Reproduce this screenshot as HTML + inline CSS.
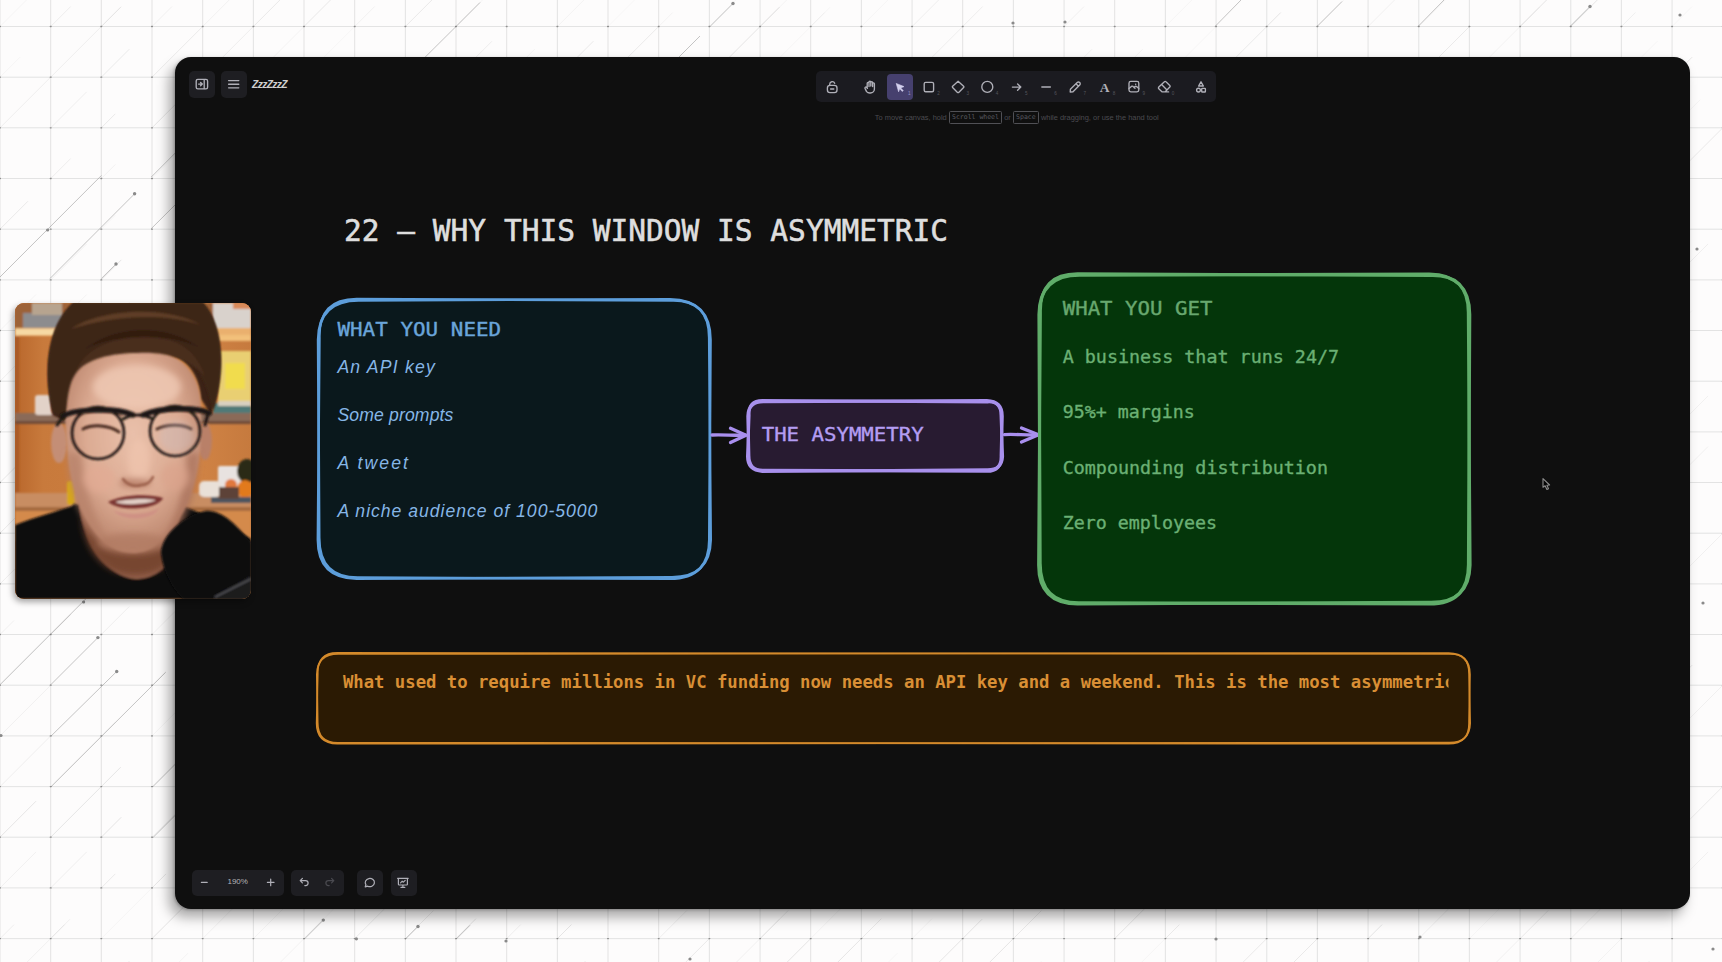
<!DOCTYPE html>
<html lang="en">
<head>
<meta charset="utf-8">
<title>ZzzZzzZ - whiteboard</title>
<style>
html,body{margin:0;padding:0;}
body{width:1722px;height:962px;overflow:hidden;position:relative;background:#fdfcfc;font-family:"Liberation Sans",sans-serif;}
#grid{position:absolute;left:0;top:0;width:1722px;height:962px;}
#win{position:absolute;left:175px;top:57px;width:1515px;height:851.5px;background:#0f0f0f;border-radius:16px;box-shadow:-6px 8px 13px rgba(0,0,0,0.34), -1px 1px 3px rgba(0,0,0,0.25);}
.btn{position:absolute;background:#1e1e22;border-radius:5px;}
#title{position:absolute;left:252px;top:78.5px;font:italic bold 10.3px "Liberation Sans",sans-serif;color:#cfcfcf;letter-spacing:-0.65px;}
#tools{position:absolute;left:816px;top:71px;width:400px;height:30.5px;background:#1b1b20;border-radius:5px;}
#sel{position:absolute;left:887px;top:73.5px;width:26px;height:26.5px;background:#46406e;border-radius:4px;}
#hint{position:absolute;left:874.8px;top:112.6px;width:290px;font:7.45px "Liberation Sans",sans-serif;color:#4b4b4f;white-space:nowrap;letter-spacing:0;}
#hint kbd{font:6.5px "DejaVu Sans Mono","Liberation Mono",monospace;border:0.8px solid #505055;border-radius:1.5px;padding:1.2px 2.2px;color:#5a5a60;}
#canvas{position:absolute;left:0;top:0;width:1722px;height:962px;}
#cam{position:absolute;left:15px;top:303px;width:236px;height:296px;border-radius:9px;overflow:hidden;background:#b8733c;box-shadow:-2px 3px 6px rgba(0,0,0,0.35);}
#zoomtxt{position:absolute;left:217.7px;top:877.3px;width:40px;text-align:center;font:8px "Liberation Sans",sans-serif;color:#b4b4b8;}
</style>
</head>
<body>
<svg id="grid" viewBox="0 0 1722 962">
<rect width="1722" height="962" fill="#fdfcfc"/>
<path d="M0.0 0V962M50.7 0V962M101.3 0V962M152.0 0V962M202.7 0V962M253.4 0V962M304.0 0V962M354.7 0V962M405.4 0V962M456.0 0V962M506.7 0V962M557.4 0V962M608.0 0V962M658.7 0V962M709.4 0V962M760.1 0V962M810.7 0V962M861.4 0V962M912.1 0V962M962.7 0V962M1013.4 0V962M1064.1 0V962M1114.7 0V962M1165.4 0V962M1216.1 0V962M1266.8 0V962M1317.4 0V962M1368.1 0V962M1418.8 0V962M1469.4 0V962M1520.1 0V962M1570.8 0V962M1621.4 0V962M1672.1 0V962M1722.8 0V962M0 26.5H1722M0 77.2H1722M0 127.8H1722M0 178.5H1722M0 229.2H1722M0 279.9H1722M0 330.5H1722M0 381.2H1722M0 431.9H1722M0 482.5H1722M0 533.2H1722M0 583.9H1722M0 634.5H1722M0 685.2H1722M0 735.9H1722M0 786.6H1722M0 837.2H1722M0 887.9H1722M0 938.6H1722" stroke="#e0e0e0" stroke-width="0.9" fill="none"/>
<path d="M-51.1 26.5h0.8M-51.1 77.2h0.8M-51.1 127.8h0.8M-51.1 178.5h0.8M-51.1 229.2h0.8M-51.1 279.9h0.8M-51.1 330.5h0.8M-51.1 381.2h0.8M-51.1 431.9h0.8M-51.1 482.5h0.8M-51.1 533.2h0.8M-51.1 583.9h0.8M-51.1 634.5h0.8M-51.1 685.2h0.8M-51.1 735.9h0.8M-51.1 786.6h0.8M-51.1 837.2h0.8M-51.1 887.9h0.8M-51.1 938.6h0.8M-51.1 989.2h0.8M-0.4 26.5h0.8M-0.4 77.2h0.8M-0.4 127.8h0.8M-0.4 178.5h0.8M-0.4 229.2h0.8M-0.4 279.9h0.8M-0.4 330.5h0.8M-0.4 381.2h0.8M-0.4 431.9h0.8M-0.4 482.5h0.8M-0.4 533.2h0.8M-0.4 583.9h0.8M-0.4 634.5h0.8M-0.4 685.2h0.8M-0.4 735.9h0.8M-0.4 786.6h0.8M-0.4 837.2h0.8M-0.4 887.9h0.8M-0.4 938.6h0.8M-0.4 989.2h0.8M50.3 26.5h0.8M50.3 77.2h0.8M50.3 127.8h0.8M50.3 178.5h0.8M50.3 229.2h0.8M50.3 279.9h0.8M50.3 330.5h0.8M50.3 381.2h0.8M50.3 431.9h0.8M50.3 482.5h0.8M50.3 533.2h0.8M50.3 583.9h0.8M50.3 634.5h0.8M50.3 685.2h0.8M50.3 735.9h0.8M50.3 786.6h0.8M50.3 837.2h0.8M50.3 887.9h0.8M50.3 938.6h0.8M50.3 989.2h0.8M100.9 26.5h0.8M100.9 77.2h0.8M100.9 127.8h0.8M100.9 178.5h0.8M100.9 229.2h0.8M100.9 279.9h0.8M100.9 330.5h0.8M100.9 381.2h0.8M100.9 431.9h0.8M100.9 482.5h0.8M100.9 533.2h0.8M100.9 583.9h0.8M100.9 634.5h0.8M100.9 685.2h0.8M100.9 735.9h0.8M100.9 786.6h0.8M100.9 837.2h0.8M100.9 887.9h0.8M100.9 938.6h0.8M100.9 989.2h0.8M151.6 26.5h0.8M151.6 77.2h0.8M151.6 127.8h0.8M151.6 178.5h0.8M151.6 229.2h0.8M151.6 279.9h0.8M151.6 330.5h0.8M151.6 381.2h0.8M151.6 431.9h0.8M151.6 482.5h0.8M151.6 533.2h0.8M151.6 583.9h0.8M151.6 634.5h0.8M151.6 685.2h0.8M151.6 735.9h0.8M151.6 786.6h0.8M151.6 837.2h0.8M151.6 887.9h0.8M151.6 938.6h0.8M151.6 989.2h0.8M202.3 26.5h0.8M202.3 77.2h0.8M202.3 127.8h0.8M202.3 178.5h0.8M202.3 229.2h0.8M202.3 279.9h0.8M202.3 330.5h0.8M202.3 381.2h0.8M202.3 431.9h0.8M202.3 482.5h0.8M202.3 533.2h0.8M202.3 583.9h0.8M202.3 634.5h0.8M202.3 685.2h0.8M202.3 735.9h0.8M202.3 786.6h0.8M202.3 837.2h0.8M202.3 887.9h0.8M202.3 938.6h0.8M202.3 989.2h0.8M253.0 26.5h0.8M253.0 77.2h0.8M253.0 887.9h0.8M253.0 938.6h0.8M253.0 989.2h0.8M303.6 26.5h0.8M303.6 77.2h0.8M303.6 887.9h0.8M303.6 938.6h0.8M303.6 989.2h0.8M354.3 26.5h0.8M354.3 77.2h0.8M354.3 887.9h0.8M354.3 938.6h0.8M354.3 989.2h0.8M405.0 26.5h0.8M405.0 77.2h0.8M405.0 887.9h0.8M405.0 938.6h0.8M405.0 989.2h0.8M455.6 26.5h0.8M455.6 77.2h0.8M455.6 887.9h0.8M455.6 938.6h0.8M455.6 989.2h0.8M506.3 26.5h0.8M506.3 77.2h0.8M506.3 887.9h0.8M506.3 938.6h0.8M506.3 989.2h0.8M557.0 26.5h0.8M557.0 77.2h0.8M557.0 887.9h0.8M557.0 938.6h0.8M557.0 989.2h0.8M607.6 26.5h0.8M607.6 77.2h0.8M607.6 887.9h0.8M607.6 938.6h0.8M607.6 989.2h0.8M658.3 26.5h0.8M658.3 77.2h0.8M658.3 887.9h0.8M658.3 938.6h0.8M658.3 989.2h0.8M709.0 26.5h0.8M709.0 77.2h0.8M709.0 887.9h0.8M709.0 938.6h0.8M709.0 989.2h0.8M759.7 26.5h0.8M759.7 77.2h0.8M759.7 887.9h0.8M759.7 938.6h0.8M759.7 989.2h0.8M810.3 26.5h0.8M810.3 77.2h0.8M810.3 887.9h0.8M810.3 938.6h0.8M810.3 989.2h0.8M861.0 26.5h0.8M861.0 77.2h0.8M861.0 887.9h0.8M861.0 938.6h0.8M861.0 989.2h0.8M911.7 26.5h0.8M911.7 77.2h0.8M911.7 887.9h0.8M911.7 938.6h0.8M911.7 989.2h0.8M962.3 26.5h0.8M962.3 77.2h0.8M962.3 887.9h0.8M962.3 938.6h0.8M962.3 989.2h0.8M1013.0 26.5h0.8M1013.0 77.2h0.8M1013.0 887.9h0.8M1013.0 938.6h0.8M1013.0 989.2h0.8M1063.7 26.5h0.8M1063.7 77.2h0.8M1063.7 887.9h0.8M1063.7 938.6h0.8M1063.7 989.2h0.8M1114.3 26.5h0.8M1114.3 77.2h0.8M1114.3 887.9h0.8M1114.3 938.6h0.8M1114.3 989.2h0.8M1165.0 26.5h0.8M1165.0 77.2h0.8M1165.0 887.9h0.8M1165.0 938.6h0.8M1165.0 989.2h0.8M1215.7 26.5h0.8M1215.7 77.2h0.8M1215.7 887.9h0.8M1215.7 938.6h0.8M1215.7 989.2h0.8M1266.3 26.5h0.8M1266.3 77.2h0.8M1266.3 887.9h0.8M1266.3 938.6h0.8M1266.3 989.2h0.8M1317.0 26.5h0.8M1317.0 77.2h0.8M1317.0 887.9h0.8M1317.0 938.6h0.8M1317.0 989.2h0.8M1367.7 26.5h0.8M1367.7 77.2h0.8M1367.7 887.9h0.8M1367.7 938.6h0.8M1367.7 989.2h0.8M1418.4 26.5h0.8M1418.4 77.2h0.8M1418.4 887.9h0.8M1418.4 938.6h0.8M1418.4 989.2h0.8M1469.0 26.5h0.8M1469.0 77.2h0.8M1469.0 887.9h0.8M1469.0 938.6h0.8M1469.0 989.2h0.8M1519.7 26.5h0.8M1519.7 77.2h0.8M1519.7 887.9h0.8M1519.7 938.6h0.8M1519.7 989.2h0.8M1570.4 26.5h0.8M1570.4 77.2h0.8M1570.4 887.9h0.8M1570.4 938.6h0.8M1570.4 989.2h0.8M1621.0 26.5h0.8M1621.0 77.2h0.8M1621.0 887.9h0.8M1621.0 938.6h0.8M1621.0 989.2h0.8M1671.7 26.5h0.8M1671.7 77.2h0.8M1671.7 127.8h0.8M1671.7 178.5h0.8M1671.7 229.2h0.8M1671.7 279.9h0.8M1671.7 330.5h0.8M1671.7 381.2h0.8M1671.7 431.9h0.8M1671.7 482.5h0.8M1671.7 533.2h0.8M1671.7 583.9h0.8M1671.7 634.5h0.8M1671.7 685.2h0.8M1671.7 735.9h0.8M1671.7 786.6h0.8M1671.7 837.2h0.8M1671.7 887.9h0.8M1671.7 938.6h0.8M1671.7 989.2h0.8M1722.4 26.5h0.8M1722.4 77.2h0.8M1722.4 127.8h0.8M1722.4 178.5h0.8M1722.4 229.2h0.8M1722.4 279.9h0.8M1722.4 330.5h0.8M1722.4 381.2h0.8M1722.4 431.9h0.8M1722.4 482.5h0.8M1722.4 533.2h0.8M1722.4 583.9h0.8M1722.4 634.5h0.8M1722.4 685.2h0.8M1722.4 735.9h0.8M1722.4 786.6h0.8M1722.4 837.2h0.8M1722.4 887.9h0.8M1722.4 938.6h0.8M1722.4 989.2h0.8" stroke="#909090" stroke-width="1.3" stroke-linecap="round" fill="none"/>
<path d="M-50.7 26.5l20.0 -20.0M-50.7 229.2l14.0 -14.0M-50.7 887.9l20.0 -20.0M0.0 127.8l50.7 -50.7M0.0 381.2l20.0 -20.0M0.0 583.9l70.0 -70.0M0.0 786.6l50.7 -50.7M0.0 938.6l14.0 -14.0M50.7 26.5l20.0 -20.0M50.7 77.2l70.0 -70.0M50.7 127.8l36.0 -36.0M50.7 178.5l20.0 -20.0M50.7 887.9l36.0 -36.0M50.7 938.6l14.0 -14.0M101.3 26.5l20.0 -20.0M101.3 634.5l28.0 -28.0M152.0 533.2l28.0 -28.0M202.7 77.2l50.7 -50.7M202.7 229.2l50.7 -50.7M202.7 837.2l50.7 -50.7M456.0 77.2l36.0 -36.0M506.7 887.9l20.0 -20.0M506.7 938.6l14.0 -14.0M658.7 77.2l20.0 -20.0M658.7 938.6l28.0 -28.0M912.1 26.5l50.7 -50.7M912.1 77.2l50.7 -50.7M962.7 26.5l20.0 -20.0M1368.1 989.2l20.0 -20.0M1469.4 887.9l50.7 -50.7M1520.1 989.2l14.0 -14.0M1570.8 938.6l36.0 -36.0M1621.4 26.5l14.0 -14.0M1621.4 989.2l28.0 -28.0M1672.1 279.9l36.0 -36.0M1672.1 786.6l14.0 -14.0M1722.8 178.5l70.0 -70.0M1722.8 533.2l28.0 -28.0M1722.8 837.2l50.7 -50.7M1722.8 938.6l50.7 -50.7" stroke="#777" stroke-width="0.9" opacity="0.12" fill="none"/>
<path d="M-50.7 77.2l14.0 -14.0M-50.7 330.5l14.0 -14.0M-50.7 431.9l14.0 -14.0M-50.7 583.9l20.0 -20.0M-50.7 634.5l28.0 -28.0M-50.7 735.9l50.7 -50.7M-50.7 837.2l14.0 -14.0M0.0 229.2l28.0 -28.0M0.0 533.2l28.0 -28.0M50.7 583.9l28.0 -28.0M101.3 77.2l28.0 -28.0M101.3 127.8l14.0 -14.0M101.3 330.5l28.0 -28.0M101.3 887.9l14.0 -14.0M101.3 989.2l28.0 -28.0M152.0 77.2l50.7 -50.7M202.7 330.5l70.0 -70.0M202.7 786.6l20.0 -20.0M253.4 26.5l70.0 -70.0M253.4 887.9l50.7 -50.7M304.0 26.5l36.0 -36.0M304.0 887.9l50.7 -50.7M354.7 77.2l14.0 -14.0M354.7 938.6l50.7 -50.7M405.4 26.5l50.7 -50.7M405.4 938.6l28.0 -28.0M557.4 77.2l36.0 -36.0M557.4 989.2l28.0 -28.0M608.0 77.2l50.7 -50.7M658.7 989.2l50.7 -50.7M760.1 887.9l28.0 -28.0M760.1 938.6l28.0 -28.0M861.4 938.6l20.0 -20.0M1013.4 887.9l36.0 -36.0M1013.4 938.6l28.0 -28.0M1165.4 938.6l14.0 -14.0M1216.1 77.2l50.7 -50.7M1216.1 989.2l50.7 -50.7M1266.8 989.2l50.7 -50.7M1368.1 887.9l36.0 -36.0M1418.8 77.2l50.7 -50.7M1520.1 77.2l14.0 -14.0M1520.1 938.6l28.0 -28.0M1570.8 887.9l50.7 -50.7M1672.1 178.5l50.7 -50.7M1672.1 837.2l70.0 -70.0M1722.8 330.5l50.7 -50.7" stroke="#777" stroke-width="0.9" opacity="0.16" fill="none"/>
<path d="M-50.7 127.8l50.7 -50.7M-50.7 279.9l20.0 -20.0M-50.7 786.6l28.0 -28.0M0.0 77.2l20.0 -20.0M0.0 431.9l50.7 -50.7M0.0 685.2l50.7 -50.7M50.7 431.9l20.0 -20.0M50.7 786.6l50.7 -50.7M101.3 381.2l14.0 -14.0M101.3 938.6l50.7 -50.7M152.0 786.6l50.7 -50.7M202.7 127.8l50.7 -50.7M202.7 482.5l20.0 -20.0M304.0 77.2l50.7 -50.7M304.0 938.6l70.0 -70.0M354.7 887.9l14.0 -14.0M608.0 26.5l50.7 -50.7M608.0 887.9l14.0 -14.0M608.0 989.2l14.0 -14.0M709.4 26.5l28.0 -28.0M760.1 77.2l70.0 -70.0M861.4 26.5l28.0 -28.0M861.4 989.2l36.0 -36.0M1013.4 77.2l14.0 -14.0M1013.4 989.2l28.0 -28.0M1064.1 989.2l20.0 -20.0M1114.7 887.9l36.0 -36.0M1114.7 989.2l50.7 -50.7M1165.4 26.5l70.0 -70.0M1165.4 77.2l50.7 -50.7M1317.4 26.5l70.0 -70.0M1317.4 989.2l14.0 -14.0M1418.8 26.5l36.0 -36.0M1418.8 887.9l50.7 -50.7M1469.4 938.6l36.0 -36.0M1621.4 77.2l36.0 -36.0M1672.1 26.5l20.0 -20.0M1672.1 330.5l20.0 -20.0M1722.8 381.2l14.0 -14.0" stroke="#777" stroke-width="0.9" opacity="0.06" fill="none"/>
<path d="M-50.7 381.2l20.0 -20.0M0.0 837.2l36.0 -36.0M50.7 634.5l20.0 -20.0M50.7 837.2l70.0 -70.0M101.3 279.9l20.0 -20.0M101.3 583.9l14.0 -14.0M101.3 837.2l20.0 -20.0M152.0 127.8l28.0 -28.0M152.0 381.2l28.0 -28.0M152.0 482.5l20.0 -20.0M152.0 887.9l14.0 -14.0M152.0 938.6l36.0 -36.0M202.7 533.2l50.7 -50.7M354.7 989.2l20.0 -20.0M405.4 887.9l20.0 -20.0M456.0 938.6l20.0 -20.0M557.4 938.6l14.0 -14.0M709.4 77.2l70.0 -70.0M760.1 989.2l50.7 -50.7M810.7 989.2l50.7 -50.7M861.4 887.9l14.0 -14.0M912.1 989.2l70.0 -70.0M962.7 989.2l50.7 -50.7M1114.7 938.6l50.7 -50.7M1216.1 887.9l28.0 -28.0M1266.8 26.5l14.0 -14.0M1266.8 887.9l50.7 -50.7M1317.4 887.9l50.7 -50.7M1368.1 938.6l14.0 -14.0M1520.1 26.5l50.7 -50.7M1520.1 887.9l28.0 -28.0M1570.8 26.5l28.0 -28.0M1570.8 77.2l20.0 -20.0M1672.1 77.2l20.0 -20.0M1672.1 229.2l14.0 -14.0M1672.1 685.2l20.0 -20.0M1672.1 989.2l14.0 -14.0M1722.8 685.2l28.0 -28.0" stroke="#777" stroke-width="0.9" opacity="0.2" fill="none"/>
<path d="M-50.7 482.5l14.0 -14.0M-50.7 533.2l70.0 -70.0M0.0 26.5l70.0 -70.0M0.0 330.5l36.0 -36.0M50.7 330.5l36.0 -36.0M50.7 381.2l20.0 -20.0M50.7 482.5l50.7 -50.7M50.7 533.2l14.0 -14.0M50.7 989.2l14.0 -14.0M101.3 229.2l14.0 -14.0M101.3 735.9l14.0 -14.0M152.0 178.5l70.0 -70.0M152.0 330.5l20.0 -20.0M152.0 685.2l14.0 -14.0M152.0 735.9l28.0 -28.0M152.0 989.2l36.0 -36.0M202.7 178.5l20.0 -20.0M202.7 431.9l28.0 -28.0M202.7 583.9l50.7 -50.7M202.7 634.5l70.0 -70.0M202.7 735.9l28.0 -28.0M253.4 77.2l50.7 -50.7M253.4 938.6l36.0 -36.0M253.4 989.2l70.0 -70.0M456.0 26.5l36.0 -36.0M456.0 887.9l50.7 -50.7M456.0 989.2l14.0 -14.0M506.7 77.2l28.0 -28.0M557.4 26.5l50.7 -50.7M557.4 887.9l36.0 -36.0M658.7 26.5l14.0 -14.0M760.1 26.5l70.0 -70.0M810.7 26.5l14.0 -14.0M810.7 77.2l20.0 -20.0M810.7 938.6l50.7 -50.7M912.1 938.6l20.0 -20.0M1114.7 77.2l28.0 -28.0M1469.4 77.2l70.0 -70.0M1570.8 989.2l50.7 -50.7M1672.1 127.8l28.0 -28.0M1722.8 26.5l20.0 -20.0M1722.8 127.8l28.0 -28.0M1722.8 482.5l50.7 -50.7M1722.8 583.9l50.7 -50.7M1722.8 887.9l50.7 -50.7" stroke="#777" stroke-width="0.9" opacity="0.08" fill="none"/>
<path d="M-50.7 938.6l36.0 -36.0M-50.7 989.2l36.0 -36.0M0.0 482.5l50.7 -50.7M0.0 634.5l14.0 -14.0M0.0 735.9l50.7 -50.7M0.0 887.9l36.0 -36.0M0.0 989.2l70.0 -70.0M50.7 279.9l36.0 -36.0M101.3 178.5l14.0 -14.0M101.3 533.2l36.0 -36.0M152.0 26.5l20.0 -20.0M152.0 431.9l14.0 -14.0M152.0 634.5l28.0 -28.0M152.0 837.2l50.7 -50.7M202.7 26.5l50.7 -50.7M202.7 938.6l50.7 -50.7M354.7 26.5l20.0 -20.0M709.4 887.9l14.0 -14.0M709.4 989.2l70.0 -70.0M1064.1 26.5l20.0 -20.0M1064.1 77.2l28.0 -28.0M1165.4 887.9l28.0 -28.0M1368.1 26.5l50.7 -50.7M1418.8 938.6l36.0 -36.0M1469.4 989.2l50.7 -50.7M1672.1 431.9l36.0 -36.0M1672.1 482.5l36.0 -36.0M1672.1 533.2l14.0 -14.0M1672.1 583.9l70.0 -70.0M1672.1 735.9l50.7 -50.7M1672.1 887.9l36.0 -36.0M1722.8 634.5l36.0 -36.0M1722.8 735.9l50.7 -50.7M1722.8 786.6l20.0 -20.0M1722.8 989.2l36.0 -36.0" stroke="#777" stroke-width="0.9" opacity="0.1" fill="none"/>
<path d="M0 277L101.4 175.5" stroke="#666" stroke-width="0.9" opacity="0.42"/>
<path d="M50 278.5L134.6 193.8" stroke="#666" stroke-width="0.9" opacity="0.42"/>
<circle cx="134.6" cy="193.8" r="1.7" fill="#8a8a8a"/>
<path d="M101.4 278.5L116 264" stroke="#666" stroke-width="0.9" opacity="0.42"/>
<circle cx="116" cy="264" r="1.7" fill="#8a8a8a"/>
<path d="M151.3 177L176 152.3" stroke="#666" stroke-width="0.9" opacity="0.42"/>
<path d="M151.3 228.6L176 204" stroke="#666" stroke-width="0.9" opacity="0.42"/>
<path d="M0 684.7L86 598.7" stroke="#666" stroke-width="0.9" opacity="0.42"/>
<path d="M50.8 684.7L97.9 637.6" stroke="#666" stroke-width="0.9" opacity="0.42"/>
<circle cx="97.9" cy="637.6" r="1.7" fill="#8a8a8a"/>
<path d="M50.8 736.3L116.7 671.5" stroke="#666" stroke-width="0.9" opacity="0.42"/>
<circle cx="116.7" cy="671.5" r="1.7" fill="#8a8a8a"/>
<path d="M50.8 787L165.7 672.3" stroke="#666" stroke-width="0.9" opacity="0.42"/>
<path d="M152.5 787L180 759.5" stroke="#666" stroke-width="0.9" opacity="0.42"/>
<path d="M152.5 838L180 810.5" stroke="#666" stroke-width="0.9" opacity="0.42"/>
<path d="M304.1 939.3L323.3 920.1" stroke="#666" stroke-width="0.9" opacity="0.42"/>
<circle cx="323.3" cy="920.1" r="1.7" fill="#8a8a8a"/>
<path d="M405.2 939.3L418 926.5" stroke="#666" stroke-width="0.9" opacity="0.42"/>
<circle cx="418" cy="926.5" r="1.7" fill="#8a8a8a"/>
<path d="M456 939.3L470 925.3" stroke="#666" stroke-width="0.9" opacity="0.42"/>
<path d="M1317 26.5L1342 1.5" stroke="#666" stroke-width="0.9" opacity="0.42"/>
<path d="M1570 26.5L1590 6.5" stroke="#666" stroke-width="0.9" opacity="0.42"/>
<circle cx="1590" cy="6.5" r="1.7" fill="#8a8a8a"/>
<path d="M1418 26.5L1444 0" stroke="#666" stroke-width="0.9" opacity="0.42"/>
<path d="M1215 26.5L1241 0" stroke="#666" stroke-width="0.9" opacity="0.42"/>
<path d="M710 26.5L733 3.5" stroke="#666" stroke-width="0.9" opacity="0.42"/>
<circle cx="733" cy="3.5" r="1.7" fill="#8a8a8a"/>
<path d="M456 26.5L480 2.5" stroke="#666" stroke-width="0.9" opacity="0.42"/>
<path d="M659 77L700 36" stroke="#666" stroke-width="0.9" opacity="0.42"/>
<path d="M405 77.2L456 26.5" stroke="#666" stroke-width="0.9" opacity="0.42"/>
<circle cx="47.6" cy="230" r="1.6" fill="#8a8a8a"/>
<circle cx="1" cy="735.5" r="1.6" fill="#8a8a8a"/>
<circle cx="83.6" cy="602" r="1.6" fill="#8a8a8a"/>
<circle cx="356.4" cy="938.8" r="1.6" fill="#8a8a8a"/>
<circle cx="506" cy="941" r="1.6" fill="#8a8a8a"/>
<circle cx="690" cy="959" r="1.6" fill="#8a8a8a"/>
<circle cx="1216" cy="939" r="1.6" fill="#8a8a8a"/>
<circle cx="1420" cy="937" r="1.6" fill="#8a8a8a"/>
<circle cx="1013" cy="23" r="1.6" fill="#8a8a8a"/>
<circle cx="1065" cy="22" r="1.6" fill="#8a8a8a"/>
<circle cx="1680" cy="15" r="1.6" fill="#8a8a8a"/>
<circle cx="1713" cy="949" r="1.6" fill="#8a8a8a"/>
<circle cx="1697" cy="249" r="1.6" fill="#8a8a8a"/>
<circle cx="1703" cy="603" r="1.6" fill="#8a8a8a"/>
</svg>

<div id="win"></div>

<!-- top-left buttons -->
<div class="btn" style="left:189px;top:71px;width:26px;height:26.5px"></div>
<div class="btn" style="left:221px;top:71px;width:26px;height:26.5px"></div>
<div id="title">ZzzZzzZ</div>

<!-- toolbar -->
<div id="tools"></div>
<div id="sel"></div>
<div id="hint">To move canvas, hold <kbd>Scroll wheel</kbd> or <kbd>Space</kbd> while dragging, or use the hand tool</div>

<!-- bottom-left controls -->
<div class="btn" style="left:192px;top:869.5px;width:92px;height:26px"></div>
<div class="btn" style="left:290.5px;top:869.5px;width:53px;height:26px"></div>
<div class="btn" style="left:356.5px;top:869.5px;width:26px;height:26px"></div>
<div class="btn" style="left:390.5px;top:869.5px;width:26px;height:26px"></div>
<div id="zoomtxt">190%</div>

<svg id="canvas" viewBox="0 0 1722 962">
<!-- ICONS -->
<g fill="none" stroke="#b0b0b8" stroke-width="1.35" stroke-linecap="round" stroke-linejoin="round">
<rect x="196.2" y="79.3" width="11.4" height="9.6" rx="1.6"/><path d="M204.2 79.6V88.6"/><path d="M198.6 84.1H202M200.6 82.4L202.3 84.1L200.6 85.8"/>
<path d="M228.6 80.6H238.8M228.6 84.2H238.8M228.6 87.8H238.8"/>
<rect x="827.4" y="85.4" width="9.6" height="7.2" rx="2.6"/><path d="M829.7 85.2V84.2A2.6 2.6 0 0 1 834.7 83.3"/><path d="M830.6 89H833.8"/>
<path d="M867.2 87.6V83.2a0.9 0.9 0 0 1 1.8 0V86.5M869 86V82.2a0.9 0.9 0 0 1 1.8 0V86M870.8 86V82.6a0.9 0.9 0 0 1 1.8 0V86.3M872.6 86.6V83.8a0.9 0.9 0 0 1 1.8 0V89a4 4 0 0 1-4 4h-0.8a4 4 0 0 1-3-1.4L865 88.4a0.95 0.95 0 0 1 1.5-1.1L867.4 88.4"/>
<rect x="924.2" y="82.3" width="9.4" height="9.4" rx="1.5"/>
<path d="M958.1 81.3L963.6 86.3Q964.2 86.9 963.6 87.5L958.7 92.4Q958.1 92.9 957.5 92.4L952.6 87.5Q952 86.9 952.6 86.3Z"/>
<circle cx="987.3" cy="86.9" r="5.5"/>
<path d="M1012.4 87.1H1020.8M1017.6 83.9L1020.8 87.1L1017.6 90.3"/>
<path d="M1041.8 87H1050.4"/>
<path d="M1070.2 92L1070.4 89.2L1077.2 82.6A1.7 1.7 0 0 1 1079.7 85.1L1073 91.8ZM1076 83.8L1078.5 86.3"/>
<rect x="1129" y="81.4" width="9.8" height="10.4" rx="1.8"/><path d="M1129 88.6L1131.4 86.4Q1132.2 85.8 1133 86.4L1135 88.2M1134 87.5L1135 86.6Q1135.8 86 1136.6 86.6L1138.8 88.6"/><path d="M1135.6 84.2H1135.7"/>
<path d="M1168.6 91.9H1162.2L1158.8 88.7A1.1 1.1 0 0 1 1158.8 87.1L1164.4 81.7A1.1 1.1 0 0 1 1166 81.7L1169.8 85.5A1.1 1.1 0 0 1 1169.8 87.1L1165 91.9M1161.6 84.5L1167 89.9"/>
<path d="M1201 81.8L1203.4 86H1198.6Z"/><circle cx="1198.5" cy="90.1" r="1.9"/><rect x="1201.7" y="88.3" width="3.7" height="3.7" rx="0.6"/>
</g>
<path d="M896.2 83.4L904 86.6L900.7 87.9L903.2 90.6L902.3 91.5L899.7 88.8L898.6 91.8Z" fill="#d4d0ee" stroke="#d4d0ee" stroke-width="0.6" stroke-linejoin="round"/>
<text x="1104.6" y="91.8" font-family='"Liberation Serif", serif' font-weight="bold" font-size="13.5" fill="#b0b0b8" text-anchor="middle">A</text>
<g font-family='"Liberation Sans", sans-serif' font-size="4.6" fill="#55555c">
<text x="908" y="95.2" fill="#9a96c4">1</text>
<text x="937.2" y="95.2">2</text>
<text x="966.6" y="95.2">3</text>
<text x="995.8" y="95.2">4</text>
<text x="1025" y="95.2">5</text>
<text x="1054.2" y="95.2">6</text>
<text x="1083.4" y="95.2">7</text>
<text x="1112.8" y="95.2">8</text>
<text x="1142.4" y="95.2">9</text>
<text x="1171.8" y="95.2">0</text>
</g>
<g fill="none" stroke="#b0b0b8" stroke-width="1.2" stroke-linecap="round" stroke-linejoin="round">
<path d="M201.4 882.4H207.2"/>
<path d="M267.4 882.4H274M270.7 879.1V885.7"/>
<path d="M302.4 878.4L300.2 880.6L302.4 882.8M300.4 880.6H305.6A2.5 2.5 0 0 1 305.6 885.6H304.8"/>
<path d="M365.2 886.9L365.9 884.7A4.6 4.1 0 1 1 367.7 886.2Z"/>
<path d="M397.6 878.3H408.2M398.4 878.3V884.2A0.8 0.8 0 0 0 399.2 885H406.6A0.8 0.8 0 0 0 407.4 884.2V878.3M402.9 885V886.6M401 887.4H404.8M400.6 882.8L402.2 881.2L403.4 882.2L405.2 880.4"/>
</g>
<g fill="none" stroke="#4a4a50" stroke-width="1.2" stroke-linecap="round" stroke-linejoin="round"><path d="M331.6 878.4L333.8 880.6L331.6 882.8M333.6 880.6H328.4A2.5 2.5 0 0 0 328.4 885.6H329.2"/></g>
<!-- /ICONS -->
<!-- CANVAS-CONTENT -->
<text x="344" y="240.5" font-family='"DejaVu Sans Mono", "Liberation Mono", monospace' font-size="29.6" fill="#dedede" stroke="#dedede" stroke-width="0.55" textLength="604" lengthAdjust="spacingAndGlyphs">22 — WHY THIS WINDOW IS ASYMMETRIC</text>
<path d="M358.6 299.8 L670 299.8 Q710 299.8 710 339.8 L710 538 Q710 578 670 578 L358.6 578 Q318.6 578 318.6 538 L318.6 339.8 Q318.6 299.8 358.6 299.8 Z" fill="#0a181c"/>
<path d="M358.6 300.40000000000003 L670 299.2 Q710.5 299.8 710.5 339.8 L709.3 538 Q710 578.8 670 578.8 L358.6 577.6 Q319.20000000000005 578 319.20000000000005 538 L318.1 339.8 Q318.6 300.40000000000003 358.6 300.40000000000003 Z" fill="none" stroke="#5d9edb" stroke-width="2.6" stroke-linejoin="round"/>
<path d="M356.6 299.0 L672 300.5 Q709.1 299.8 709.1 337.8 L710.8 540 Q710 577.1 672 577.1 L356.6 578.9 Q317.8 578 317.8 540 L319.5 337.8 Q318.6 299.0 356.6 299.0 Z" fill="none" stroke="#5d9edb" stroke-width="2.4" stroke-linejoin="round"/>
<text x="337.4" y="335.5" font-family='"DejaVu Sans Mono", "Liberation Mono", monospace' font-size="20.2" fill="#6aa5da" stroke="#6aa5da" stroke-width="0.4" textLength="163.8" lengthAdjust="spacingAndGlyphs">WHAT YOU NEED</text>
<text x="337.4" y="373" font-family='"Liberation Sans", sans-serif' font-style="italic" font-size="17.6" fill="#86b6e6" textLength="97.3" lengthAdjust="spacing">An API key</text>
<text x="337.4" y="421.3" font-family='"Liberation Sans", sans-serif' font-style="italic" font-size="17.6" fill="#86b6e6" textLength="116" lengthAdjust="spacing">Some prompts</text>
<text x="337.4" y="469.2" font-family='"Liberation Sans", sans-serif' font-style="italic" font-size="17.6" fill="#86b6e6" textLength="70.5" lengthAdjust="spacing">A tweet</text>
<text x="337.4" y="517.4" font-family='"Liberation Sans", sans-serif' font-style="italic" font-size="17.6" fill="#86b6e6" textLength="260" lengthAdjust="spacing">A niche audience of 100-5000</text>
<path d="M763.3 401.2 L986.8 401.2 Q1001.8 401.2 1001.8 416.2 L1001.8 455.6 Q1001.8 470.6 986.8 470.6 L763.3 470.6 Q748.3 470.6 748.3 455.6 L748.3 416.2 Q748.3 401.2 763.3 401.2 Z" fill="#281b31"/>
<path d="M763.3 401.7 L986.8 400.7 Q1002.1999999999999 401.2 1002.1999999999999 416.2 L1001.1999999999999 455.6 Q1001.8 471.20000000000005 986.8 471.20000000000005 L763.3 470.3 Q748.8 470.6 748.8 455.6 L747.9 416.2 Q748.3 401.7 763.3 401.7 Z" fill="none" stroke="#a890ec" stroke-width="3.2" stroke-linejoin="round"/>
<path d="M762.3 400.4 L987.8 401.9 Q1001.0 401.2 1001.0 415.2 L1002.5999999999999 456.6 Q1001.8 469.8 987.8 469.8 L762.3 471.40000000000003 Q747.5 470.6 747.5 456.6 L749.0999999999999 415.2 Q748.3 400.4 762.3 400.4 Z" fill="none" stroke="#a890ec" stroke-width="3" stroke-linejoin="round"/>
<text x="761.7" y="440.6" font-family='"DejaVu Sans Mono", "Liberation Mono", monospace' font-size="20.2" fill="#b49df3" stroke="#b49df3" stroke-width="0.4" textLength="162" lengthAdjust="spacingAndGlyphs">THE ASYMMETRY</text>
<g fill="none" stroke="#a98fee" stroke-width="3.3" stroke-linecap="round" stroke-linejoin="round">
<path d="M712 435 C722 434.4 734 435.6 745.5 435.2"/><path d="M730.5 428.3 L746 435.2 L730.5 442.5"/>
<path d="M1004.5 434.6 C1014 434 1026 435.2 1038 434.8"/><path d="M1021.5 428 L1038.5 434.8 L1021.5 442"/>
</g>
<path d="M1079.5 274.6 L1429.2 274.6 Q1469.2 274.6 1469.2 314.6 L1469.2 563.2 Q1469.2 603.2 1429.2 603.2 L1079.5 603.2 Q1039.5 603.2 1039.5 563.2 L1039.5 314.6 Q1039.5 274.6 1079.5 274.6 Z" fill="#04360a"/>
<path d="M1079.5 275.20000000000005 L1429.2 274.0 Q1469.7 274.6 1469.7 314.6 L1468.5 563.2 Q1469.2 604.0 1429.2 604.0 L1079.5 602.8000000000001 Q1040.1 603.2 1040.1 563.2 L1039.0 314.6 Q1039.5 275.20000000000005 1079.5 275.20000000000005 Z" fill="none" stroke="#60ad6a" stroke-width="3.2" stroke-linejoin="round"/>
<path d="M1077.5 273.70000000000005 L1431.2 275.40000000000003 Q1468.3 274.6 1468.3 312.6 L1470.1000000000001 565.2 Q1469.2 602.3000000000001 1431.2 602.3000000000001 L1077.5 604.1 Q1038.6 603.2 1038.6 565.2 L1040.4 312.6 Q1039.5 273.70000000000005 1077.5 273.70000000000005 Z" fill="none" stroke="#60ad6a" stroke-width="3" stroke-linejoin="round"/>
<text x="1062.7" y="314.5" font-family='"DejaVu Sans Mono", "Liberation Mono", monospace' font-size="20.2" fill="#68a86f" stroke="#68a86f" stroke-width="0.4" textLength="149.7" lengthAdjust="spacingAndGlyphs">WHAT YOU GET</text>
<text x="1062.7" y="362.6" font-family='"DejaVu Sans Mono", "Liberation Mono", monospace' font-size="18" fill="#6bb074" stroke="#6bb074" stroke-width="0.35" textLength="276.4" lengthAdjust="spacingAndGlyphs">A business that runs 24/7</text>
<text x="1062.7" y="418.2" font-family='"DejaVu Sans Mono", "Liberation Mono", monospace' font-size="18" fill="#6bb074" stroke="#6bb074" stroke-width="0.35" textLength="132.1" lengthAdjust="spacingAndGlyphs">95%+ margins</text>
<text x="1062.7" y="473.8" font-family='"DejaVu Sans Mono", "Liberation Mono", monospace' font-size="18" fill="#6bb074" stroke="#6bb074" stroke-width="0.35" textLength="265.3" lengthAdjust="spacingAndGlyphs">Compounding distribution</text>
<text x="1062.7" y="529.4" font-family='"DejaVu Sans Mono", "Liberation Mono", monospace' font-size="18" fill="#6bb074" stroke="#6bb074" stroke-width="0.35" textLength="154.3" lengthAdjust="spacingAndGlyphs">Zero employees</text>
<path d="M338.2 653.5 L1448.6 653.5 Q1469.6 653.5 1469.6 674.5 L1469.6 722.2 Q1469.6 743.2 1448.6 743.2 L338.2 743.2 Q317.2 743.2 317.2 722.2 L317.2 674.5 Q317.2 653.5 338.2 653.5 Z" fill="#2b1a03"/>
<path d="M338.2 653.9 L1448.6 653.1 Q1469.8999999999999 653.5 1469.8999999999999 674.5 L1469.1 722.2 Q1469.6 743.7 1448.6 743.7 L338.2 742.9000000000001 Q317.59999999999997 743.2 317.59999999999997 722.2 L316.9 674.5 Q317.2 653.9 338.2 653.9 Z" fill="none" stroke="#d48a2b" stroke-width="1.8" stroke-linejoin="round"/>
<path d="M337.2 652.9 L1449.6 654.0 Q1469.0 653.5 1469.0 673.5 L1470.1999999999998 723.2 Q1469.6 742.6 1449.6 742.6 L337.2 743.8000000000001 Q316.59999999999997 743.2 316.59999999999997 723.2 L317.8 673.5 Q317.2 652.9 337.2 652.9 Z" fill="none" stroke="#d48a2b" stroke-width="1.6" stroke-linejoin="round"/>
<clipPath id="oc"><rect x="330" y="660" width="1118.5" height="60"/></clipPath>
<text x="342.9" y="688" font-family='"DejaVu Sans Mono", "Liberation Mono", monospace' font-size="17.3" font-weight="bold" fill="#d98f35" textLength="1111.8" lengthAdjust="spacingAndGlyphs" clip-path="url(#oc)">What used to require millions in VC funding now needs an API key and a weekend. This is the most asymmetric</text>
<path d="M1543 478.6 L1543 487.3 L1545.1 485.8 L1546.9 489.5 L1548.5 488.8 L1546.9 485.3 L1549.6 485 Z" fill="#050505" stroke="#8e8e8e" stroke-width="1.1" stroke-linejoin="round"/>
</svg>

<div id="cam">
<!-- CAM-CONTENT -->
<svg width="236" height="296" viewBox="0 0 236 296">
<defs>
<filter id="b1" x="-10%" y="-10%" width="120%" height="120%"><feGaussianBlur stdDeviation="1.2"/></filter>
<filter id="b2" x="-20%" y="-20%" width="140%" height="140%"><feGaussianBlur stdDeviation="3"/></filter>
<filter id="b3" x="-30%" y="-30%" width="160%" height="160%"><feGaussianBlur stdDeviation="6"/></filter>
<linearGradient id="wood" x1="0" y1="0" x2="1" y2="0">
<stop offset="0" stop-color="#b9672c"/><stop offset="0.12" stop-color="#c87a3c"/><stop offset="0.8" stop-color="#cf8244"/><stop offset="1" stop-color="#c67a3e"/>
</linearGradient>
<radialGradient id="skin" cx="0.5" cy="0.42" r="0.62">
<stop offset="0" stop-color="#e9c0aa"/><stop offset="0.55" stop-color="#dcab93"/><stop offset="1" stop-color="#b47d64"/>
</radialGradient>
</defs>
<rect width="236" height="296" fill="url(#wood)"/>
<g filter="url(#b1)">
<!-- top shelf area -->
<rect x="0" y="0" width="236" height="26" fill="#9c6238"/>
<rect x="8" y="10" width="40" height="16" fill="#8d8c8e"/>
<rect x="17" y="0" width="30" height="12" fill="#b7a48f"/>
<rect x="198" y="0" width="38" height="27" fill="#d9d2cc"/>
<rect x="218" y="0" width="18" height="6" fill="#d88a5a"/>
<rect x="0" y="25" width="236" height="8" fill="#eab06e"/>
<rect x="0" y="26" width="40" height="6" fill="#f6d9a4"/>
<rect x="200" y="32" width="36" height="6" fill="#f2c07a"/>
<!-- left back panel darker strip -->
<rect x="0" y="33" width="4" height="180" fill="#a85a26"/>
<!-- middle shelf -->
<rect x="0" y="110" width="236" height="10" fill="#8a6a58"/>
<rect x="0" y="118" width="236" height="3" fill="#6f4c38"/>
<!-- mug -->
<rect x="20" y="92" width="18" height="20" rx="3" fill="#e2d2c8"/>
<rect x="36" y="94" width="6" height="16" rx="2" fill="#d07040"/>
<!-- yellow book right -->
<rect x="203" y="48" width="33" height="52" fill="#e9cf72"/>
<rect x="210" y="60" width="20" height="26" fill="#f1dc4e"/>
<rect x="198" y="100" width="38" height="10" fill="#4f7a78"/>
<rect x="203" y="98" width="33" height="5" fill="#d8d0c0"/>
<!-- lower shelf -->
<rect x="0" y="190" width="236" height="16" fill="#c88d62"/>
<rect x="0" y="204" width="236" height="4" fill="#a56a40"/>
<rect x="0" y="208" width="236" height="30" fill="#d48a4c"/>
<!-- objects on lower-right shelf -->
<rect x="203" y="163" width="26" height="30" rx="2" fill="#e8e2e0"/>
<circle cx="216" cy="182" r="6" fill="#e0783c"/>
<ellipse cx="232" cy="168" rx="10" ry="12" fill="#2c2a14"/>
<ellipse cx="230" cy="186" rx="8" ry="9" fill="#e27a1e"/>
<rect x="184" y="178" width="22" height="16" rx="5" fill="#e9e0d8"/>
<rect x="196" y="194" width="40" height="6" fill="#4e5560"/>
<rect x="204" y="184" width="20" height="12" fill="#5d4238"/>
<rect x="52" y="178" width="8" height="24" rx="3" fill="#d8a818"/>
</g>
<!-- shirt -->
<g filter="url(#b1)">
<path d="M0 222 C20 214 44 208 66 200 L170 204 C196 214 222 226 236 236 L236 296 L0 296 Z" fill="#100e0e"/>
<!-- neck -->
<path d="M64 196 C66 240 96 280 122 280 C144 280 158 262 162 232 L166 190 Z" fill="#94604c"/>
<path d="M60 200 C70 250 100 276 122 276 C140 276 156 262 164 240 C158 290 150 296 122 296 C90 296 62 262 56 204 Z" fill="#100e0e"/>
</g>
<g filter="url(#b2)"><path d="M66 214 C86 262 150 264 168 212 C168 252 152 272 120 272 C90 272 70 250 66 214 Z" fill="#74432f" opacity="0.9"/></g>
<!-- ears -->
<g filter="url(#b1)">
<ellipse cx="44" cy="140" rx="8" ry="20" fill="#c48e76"/>
<ellipse cx="190" cy="138" rx="7" ry="19" fill="#b98068"/>
</g>
<!-- hair back -->
<g filter="url(#b1)">
<path d="M38 112 C28 70 32 24 58 0 L188 0 C210 24 210 76 196 112 L186 96 C184 70 170 50 140 48 C100 44 70 54 58 74 C52 88 52 100 50 118 Z" fill="#3b2416"/>
</g>
<!-- face -->
<g filter="url(#b1)">
<path d="M50 100 C48 66 72 44 116 44 C160 44 186 66 186 104 C188 150 182 190 162 220 C148 242 132 250 118 250 C102 250 88 242 76 224 C56 196 50 150 50 100 Z" fill="url(#skin)"/>
</g>
<!-- face shading -->
<g filter="url(#b2)">
<path d="M52 150 C54 196 70 232 100 248 C84 226 70 196 66 150 Z" fill="#b78068" opacity="0.7"/>
<path d="M184 150 C182 196 168 232 140 248 C158 222 170 196 172 150 Z" fill="#a8705a" opacity="0.7"/>
<ellipse cx="118" cy="240" rx="36" ry="10" fill="#b07a62" opacity="0.75"/>
<ellipse cx="122" cy="84" rx="44" ry="22" fill="#efc9b4" opacity="0.8"/>
<ellipse cx="124" cy="158" rx="11" ry="22" fill="#efc4ae" opacity="0.8"/>
<ellipse cx="120" cy="180" rx="16" ry="5" fill="#b77a64" opacity="0.8"/>
<ellipse cx="84" cy="176" rx="16" ry="14" fill="#e2ab94" opacity="0.7"/>
<ellipse cx="160" cy="174" rx="14" ry="14" fill="#dca48c" opacity="0.7"/>
</g>
<!-- hair front -->
<g filter="url(#b1)">
<path d="M38 110 C28 68 32 24 58 0 L188 0 C210 24 210 72 198 108 C194 92 190 76 180 64 C166 48 140 42 112 46 C88 48 64 58 56 80 C52 92 52 104 50 116 Z" fill="#3d2517"/>
<path d="M60 70 C72 40 110 30 150 36 C170 40 184 54 190 74 C176 56 150 48 122 50 C96 50 72 56 60 70 Z" fill="#4a2e1d"/>
<path d="M56 26 C86 6 150 2 186 22 C150 10 100 12 56 26 Z" fill="#6a452c" opacity="0.75"/><path d="M70 46 C100 22 150 20 184 44 C150 30 104 30 70 46 Z" fill="#2a170d" opacity="0.6"/>
</g>
<!-- eyes -->
<g filter="url(#b1)">
<path d="M68 126 C78 121 94 122 104 129" stroke="#4a2c20" stroke-width="3" fill="none" stroke-linecap="round"/>
<path d="M142 126 C152 121 168 121 176 126" stroke="#4a2c20" stroke-width="3" fill="none" stroke-linecap="round"/>
<path d="M64 112 C76 106 94 107 106 112" stroke="#5a3a2a" stroke-width="3.5" fill="none" stroke-linecap="round" opacity="0.55"/>
<path d="M140 110 C152 105 170 105 180 110" stroke="#5a3a2a" stroke-width="3.5" fill="none" stroke-linecap="round" opacity="0.55"/>
</g>
<!-- glasses -->
<g filter="url(#b1)" fill="none" stroke="#1c1412" stroke-linecap="round">
<circle cx="83" cy="130" r="26" stroke-width="2.6"/>
<circle cx="160" cy="128" r="25" stroke-width="2.6"/>
<path d="M48 113 C60 106 100 104 118 112" stroke-width="5.5"/>
<path d="M128 112 C146 104 182 104 194 110" stroke-width="5.5"/>
<path d="M108 116 C116 111 128 111 136 115" stroke-width="3"/>
<path d="M48 114 L42 122" stroke-width="3"/>
<path d="M193 111 L190 122" stroke-width="3"/>
</g>
<g filter="url(#b2)"><ellipse cx="162" cy="134" rx="18" ry="16" fill="#c8c4c8" opacity="0.35"/></g>
<!-- nose & mouth -->
<g filter="url(#b1)">
<path d="M108 176 C112 182 120 184 126 182 C132 182 136 178 138 174" stroke="#9a5e4a" stroke-width="2.5" fill="none" stroke-linecap="round"/>
<path d="M93 199 C104 192 134 190 148 195 C144 206 106 210 93 199 Z" fill="#7a3630"/>
<path d="M100 199 C110 196 130 195 141 197 C134 201 110 203 100 199 Z" fill="#e2cfc6"/>
<path d="M98 207 C110 213 134 212 144 205 C140 217 108 220 98 207 Z" fill="#cf9184"/>
</g>
<!-- microphone -->
<g filter="url(#b1)">
<path d="M146 250 C146 232 170 212 190 208 C206 206 222 222 236 240 L236 296 L168 296 C156 284 148 268 146 250 Z" fill="#0b0b0c"/>
<path d="M196 296 C210 286 226 278 236 272 L236 296 Z" fill="#1b1b1d"/>
<path d="M200 294 L236 276" stroke="#55555a" stroke-width="1.5"/>
</g>
</svg>
</div>
</body>
</html>
